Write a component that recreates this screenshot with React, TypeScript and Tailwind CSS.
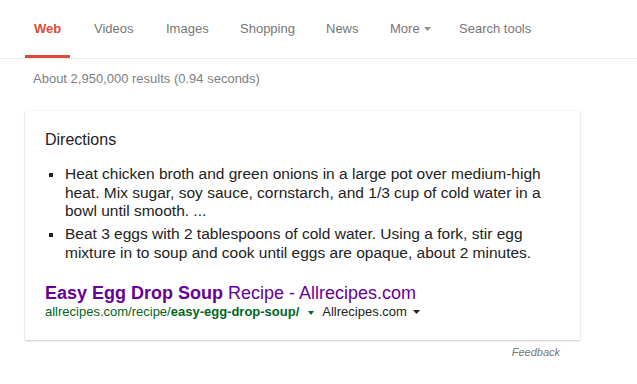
import React from "react";

const Arrow = ({ color, w = 6, h = 4 }: { color: string; w?: number; h?: number }) => (
  <svg width={w} height={h} viewBox={`0 0 ${w} ${h}`} className="block">
    <polygon points={`0,0 ${w},0 ${w / 2},${h}`} fill={color} />
  </svg>
);

export default function App() {
  return (
    <div
      className="w-[637px] h-[384px] bg-white overflow-hidden text-[#222]"
      style={{ fontFamily: '"Liberation Sans", Arial, sans-serif' }}
    >
      {/* Tabs */}
      <div className="h-[59px] border-b border-[#ebebeb] flex pl-[25px] text-[13px] leading-[16px] text-[#777]">
        <div className="w-[45px] h-[58px] flex flex-col items-center pt-[21px]">
          <span className="font-bold text-[#dd4b39]">Web</span>
          <div className="mt-auto h-[3px] w-full bg-[#dd4b39]" />
        </div>
        <div className="ml-[24px] w-[72px] pt-[21px]">Videos</div>
        <div className="w-[74px] pt-[21px]">Images</div>
        <div className="w-[86px] pt-[21px]">Shopping</div>
        <div className="w-[64px] pt-[21px]">News</div>
        <div className="w-[69px] pt-[21px] flex items-start">
          <span>More</span>
          <span className="ml-[4px] mt-[6px]">
            <Arrow color="#909090" w={7} h={4} />
          </span>
        </div>
        <div className="pt-[21px]">Search tools</div>
      </div>

      {/* Result stats */}
      <div className="mt-[12px] ml-[33px] text-[13px] leading-[16px] text-[#808080]">
        About 2,950,000 results (0.94 seconds)
      </div>

      {/* Card */}
      <div className="mt-[24px] ml-[25px] w-[555px] bg-white shadow-[0_1px_2px_rgba(0,0,0,0.2),0_0_1px_rgba(0,0,0,0.12)] px-[20px] pt-[19px] pb-[20px]">
        <div className="text-[16px] leading-[20px] text-[#222]">Directions</div>
        <ul className="mt-[15px] text-[15.5px] leading-[18.6px] text-[#222]">
          <li className="flex">
            <span className="w-[20px] shrink-0 pl-[4px] pt-[8px]">
              <span className="block w-[4px] h-[4px] bg-[#222]" />
            </span>
            <span>
              Heat chicken broth and green onions in a large pot over medium-high heat. Mix sugar, soy
              sauce, cornstarch, and 1/3 cup of cold water in a bowl until smooth. ...
            </span>
          </li>
          <li className="flex mt-[4.6px]">
            <span className="w-[20px] shrink-0 pl-[4px] pt-[8px]">
              <span className="block w-[4px] h-[4px] bg-[#222]" />
            </span>
            <span>
              Beat 3 eggs with 2 tablespoons of cold water. Using a fork, stir egg mixture in to soup and
              cook until eggs are opaque, about 2 minutes.
            </span>
          </li>
        </ul>
        <div className="mt-[20px] text-[18px] leading-[21px] text-[#660099]">
          <span className="font-bold">Easy Egg Drop Soup</span> Recipe - Allrecipes.com
        </div>
        <div className="flex items-start text-[13px] leading-[16px]">
          <span className="text-[#006621]">
            allrecipes.com/recipe/<span className="font-bold">easy-egg-drop-soup/</span>
          </span>
          <span className="ml-[9px] mt-[7px]">
            <Arrow color="#006621" w={6} h={4} />
          </span>
          <span className="ml-[8px] text-[#222]">Allrecipes.com</span>
          <span className="ml-[6px] mt-[6px]">
            <Arrow color="#222" w={7} h={4} />
          </span>
        </div>
      </div>

      <div className="w-[560px] mt-[5px] text-right text-[11px] leading-[14px] italic text-[#777]">
        Feedback
      </div>
    </div>
  );
}
